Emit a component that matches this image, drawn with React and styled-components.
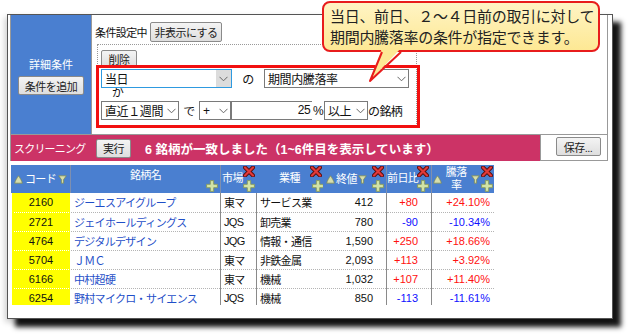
import React from "react";
import styled, { createGlobalStyle } from "styled-components";

const GlobalStyle = createGlobalStyle`
  html, body { margin: 0; padding: 0; background: #fff; }
  body { font-family: "Liberation Sans", "Noto Sans CJK JP", sans-serif; }
  * { box-sizing: border-box; }
`;

const Page = styled.div`
  position: relative;
  width: 630px;
  height: 336px;
  overflow: hidden;
  padding: 14px 0 0 7px;
`;

const Window = styled.div`
  width: 606px;
  height: 305px;
  background: #fff;
  border: 1px solid #555;
  box-shadow: 8px 8px 5px rgba(0, 0, 0, 0.92), -2px 3px 6px rgba(0, 0, 0, 0.2);
  padding: 0 4px 0 2px;
`;

const TopPanel = styled.div`
  display: grid;
  grid-template-columns: 80px 1fr;
  height: 120px;
  border-left: 1px solid #999;
  border-right: 1px solid #999;
  border-bottom: 1px solid #999;
`;

const Sidebar = styled.div`
  background: #4a7fd0;
  display: flex;
  flex-direction: column;
  align-items: center;
  justify-content: center;
  gap: 4px;
  color: #fff;
  font-size: 11px;
  padding-top: 2px;
`;

const Button = styled.button`
  font-family: "Liberation Sans", "Noto Sans CJK JP", sans-serif;
  font-size: 11px;
  letter-spacing: -0.5px;
  color: #222;
  width: ${(p) => p.$w}px;
  height: ${(p) => p.$h || 19}px;
  padding: 0;
  border: 1px solid #8a8a8a;
  border-radius: 2px;
  background: linear-gradient(#f4f4f4, #dedede);
  display: flex;
  align-items: center;
  justify-content: center;
`;

const Content = styled.div`
  border-left: 1px solid #999;
  padding: 7px 0 0 3px;
  font-size: 11px;
  color: #111;
  letter-spacing: -0.6px;
`;

const HeadLine = styled.div`
  display: flex;
  align-items: center;
  gap: 3px;
`;

const DottedBox = styled.div`
  position: relative;
  margin: 2px 0 0 2px;
  width: 320px;
  height: 84px;
  border: 1px dotted #999;
  padding: 5px 0 0 3px;
`;

const RedFrame = styled.div`
  position: absolute;
  left: -2px;
  top: 20px;
  width: 324px;
  height: 63px;
  border: 3px solid #f21010;
`;

const Row = styled.div`
  display: flex;
  align-items: center;
  height: 19px;
  margin-top: ${(p) => p.$mt || 0}px;
`;

const SelectBox = styled.div`
  position: relative;
  width: ${(p) => p.$w}px;
  height: 19px;
  border: 1px solid ${(p) => (p.$focus ? "#2e9ae0" : "#7a7a7a")};
  background: #fff;
  display: flex;
  align-items: center;
  padding-left: 3px;
  font-size: 12px;
  letter-spacing: -0.4px;
`;

const Arrow = styled.div`
  margin-left: auto;
  width: ${(p) => (p.$focus ? 15 : 13)}px;
  align-self: stretch;
  display: flex;
  align-items: center;
  justify-content: center;
  background: ${(p) => (p.$focus ? "#dcdcdc" : "transparent")};
`;

const Word = styled.span`
  display: inline-block;
  width: ${(p) => p.$w}px;
  text-align: center;
  font-size: 12px;
`;

const Ga = styled.div`
  height: 13px;
  line-height: 10px;
  padding-left: 11px;
  font-size: 12px;
`;

const NumInput = styled.div`
  width: 81px;
  height: 19px;
  border: 1px solid #7a7a7a;
  border-right: none;
  text-align: right;
  font-size: 12px;
  line-height: 17px;
  padding-right: 2px;
`;

const Suffix = styled.span`
  font-size: 12px;
`;

const ScreenRow = styled.div`
  display: flex;
  height: 26px;
  border-left: 1px solid #999;
`;

const PinkBar = styled.div`
  flex: 1;
  background: #cc3366;
  display: flex;
  align-items: center;
  color: #fff;
  padding-left: 3px;
`;

const PinkLabel = styled.span`
  width: 82px;
  font-size: 11px;
  letter-spacing: -0.8px;
`;

const MatchText = styled.span`
  margin-left: 14px;
  font-size: 12.5px;
  font-weight: bold;
  letter-spacing: 0;
`;

const SaveCell = styled.div`
  width: 68px;
  border-left: 1px solid #999;
  border-right: 1px solid #999;
  border-bottom: 1px solid #999;
  display: flex;
  align-items: center;
  justify-content: center;
  padding-left: 8px;
  padding-bottom: 2px;
`;

const TableWrap = styled.div`
  margin: 4px 0 0 1px;
  width: 483px;
  height: 140px;
  overflow: hidden;
`;

const Table = styled.table`
  border-collapse: collapse;
  table-layout: fixed;
  width: 483px;
  font-size: 11px;
`;

const Th = styled.th`
  position: relative;
  height: 28px;
  background: #4a7fd0;
  color: #fff;
  font-weight: normal;
  font-size: 11px;
  letter-spacing: -0.6px;
  white-space: nowrap;
  padding: 0 0 ${(p) => p.$pb || 0}px ${(p) => p.$pl || 0}px;
  text-align: ${(p) => p.$align || "center"};
  border-left: 1px solid ${(p) => (p.$noLine ? "#4a7fd0" : "#7e8fb0")};
  line-height: 13px;
`;

const SortHead = styled.div`
  display: flex;
  align-items: center;
  justify-content: ${(p) => p.$justify || "space-between"};
  gap: 1px;
  white-space: nowrap;
  padding: 0 ${(p) => p.$pr || 0}px 0 ${(p) => p.$pl || 0}px;
`;

const Corner = styled.span`
  position: absolute;
  right: ${(p) => p.$r}px;
  ${(p) => (p.$top ? "top: 1px;" : "bottom: 1px;")}
  line-height: 0;
`;

const Td = styled.td`
  height: 19px;
  padding: 0 ${(p) => p.$pr || 3}px 0 ${(p) => p.$pl || 3}px;
  border-bottom: 1px dotted ${(p) => (p.$code ? "#ffff00" : "#b4b4b4")};
  border-left: 1px solid ${(p) => (p.$line ? "#8a8a8a" : "transparent")};
  border-right: ${(p) => (p.$last ? "1px solid #8a8a8a" : "none")};
  background: ${(p) => (p.$code ? "#ffff00" : "#fff")};
  text-align: ${(p) => p.$align || "left"};
  color: ${(p) => p.$color || "#111"};
  white-space: nowrap;
  overflow: hidden;
  letter-spacing: ${(p) => (p.$jp ? "-0.7px" : "0")};
`;

const Callout = styled.div`
  position: absolute;
  left: 322px;
  top: 1px;
  width: 278px;
  height: 51px;
  border: 2px solid #e81c1c;
  border-radius: 8px;
  background: linear-gradient(#fff4c4, #fde894);
  padding: 3px 0 0 6px;
  font-size: 15px;
  line-height: 21px;
  letter-spacing: -0.3px;
  color: #222;
`;

const CalloutTail = styled.svg`
  position: absolute;
  left: 365px;
  top: 48px;
`;

const Chevron = () => (
  <svg width="9" height="6" viewBox="0 0 9 6">
    <path d="M0.5 0.8 L4.5 4.8 L8.5 0.8" fill="none" stroke="#666" strokeWidth="1" />
  </svg>
);

const SortUp = () => (
  <svg width="9" height="9" viewBox="0 0 9 9">
    <path d="M4.5 0.8 C6 3 8 6 8.3 8.2 L0.7 8.2 C1 6 3 3 4.5 0.8 Z" fill="#d6deae" stroke="#7f8c58" strokeWidth="0.8" />
  </svg>
);

const SortDown = () => (
  <svg width="9" height="9" viewBox="0 0 9 9">
    <path d="M0.7 0.8 L8.3 0.8 L5.6 4.6 L5.6 8.2 L3.4 8.2 L3.4 4.6 Z" fill="#d6deae" stroke="#7f8c58" strokeWidth="0.8" />
  </svg>
);

const DelX = () => (
  <svg width="12" height="11" viewBox="0 0 12 11">
    <path d="M2 1.5 L10 9.5 M10 1.5 L2 9.5" stroke="#5a0c0c" strokeWidth="4" strokeLinecap="round" />
    <path d="M2 1.5 L10 9.5 M10 1.5 L2 9.5" stroke="#e23a3a" strokeWidth="2.2" strokeLinecap="round" />
  </svg>
);

const Plus = () => (
  <svg width="12" height="12" viewBox="0 0 12 12">
    <path d="M4.3 0.6 H7.7 V4.3 H11.4 V7.7 H7.7 V11.4 H4.3 V7.7 H0.6 V4.3 H4.3 Z" fill="#d2e4a6" stroke="#86995c" strokeWidth="0.9" />
  </svg>
);

const Select = ({ w, focus, children }) => (
  <SelectBox $w={w} $focus={focus}>
    {children}
    <Arrow $focus={focus}>
      <Chevron />
    </Arrow>
  </SelectBox>
);

const rows = [
  ["2160", "ジーエスアイグループ", "東マ", "サービス業", "412", "+80", "+24.10%"],
  ["2721", "ジェイホールディングス", "JQS", "卸売業", "780", "-90", "-10.34%"],
  ["4764", "デジタルデザイン", "JQG", "情報・通信", "1,590", "+250", "+18.66%"],
  ["5704", "ＪＭＣ", "東マ", "非鉄金属", "2,093", "+113", "+3.92%"],
  ["6166", "中村超硬", "東マ", "機械", "1,032", "+107", "+11.40%"],
  ["6254", "野村マイクロ・サイエンス", "JQS", "機械", "850", "-113", "-11.61%"],
];

const signColor = (v) => (v.startsWith("-") ? "#1010ff" : "#ff1010");

export default function App() {
  return (
    <Page>
      <GlobalStyle />
      <Window>
        <TopPanel>
          <Sidebar>
            <span>詳細条件</span>
            <Button $w={66}>条件を追加</Button>
          </Sidebar>
          <Content>
            <HeadLine>
              <span>条件設定中</span>
              <Button $w={72} $h={20}>非表示にする</Button>
            </HeadLine>
            <DottedBox>
              <Button $w={36} $h={18}>削除</Button>
              <Row $mt={1}>
                <Select w={131} focus>当日</Select>
                <Word $w={32}>の</Word>
                <Select w={145}>期間内騰落率</Select>
              </Row>
              <Ga>が</Ga>
              <Row>
                <Select w={78}>直近１週間</Select>
                <Word $w={20}>で</Word>
                <Select w={32}>+</Select>
                <NumInput>25</NumInput>
                <Word $w={12}>%</Word>
                <Select w={44}>以上</Select>
                <Suffix>の銘柄</Suffix>
              </Row>
              <RedFrame />
            </DottedBox>
          </Content>
        </TopPanel>

        <ScreenRow>
          <PinkBar>
            <PinkLabel>スクリーニング</PinkLabel>
            <Button $w={35}>実行</Button>
            <MatchText>6 銘柄が一致しました（1~6件目を表示しています）</MatchText>
          </PinkBar>
          <SaveCell>
            <Button $w={45}>保存...</Button>
          </SaveCell>
        </ScreenRow>

        <TableWrap>
          <Table>
            <colgroup>
              <col style={{ width: 59 }} />
              <col style={{ width: 150 }} />
              <col style={{ width: 36 }} />
              <col style={{ width: 66 }} />
              <col style={{ width: 64 }} />
              <col style={{ width: 45 }} />
              <col style={{ width: 63 }} />
            </colgroup>
            <thead>
              <tr>
                <Th $noLine>
                  <SortHead $pl={2} $pr={3}>
                    <SortUp />
                    <span>コード</span>
                    <SortDown />
                  </SortHead>
                </Th>
                <Th $pb={8}>
                  銘柄名
                  <Corner $r={2}><Plus /></Corner>
                </Th>
                <Th $align="left" $pl={1} $pb={2}>
                  市場
                  <Corner $r={1} $top><DelX /></Corner>
                  <Corner $r={1}><Plus /></Corner>
                </Th>
                <Th $noLine $pb={2}>
                  業種
                  <Corner $r={0} $top><DelX /></Corner>
                  <Corner $r={-2}><Plus /></Corner>
                </Th>
                <Th $noLine>
                  <SortHead $pl={3} $pr={19} $justify="flex-start">
                    <SortUp />
                    <span>終値</span>
                    <SortDown />
                  </SortHead>
                  <Corner $r={2} $top><DelX /></Corner>
                  <Corner $r={2}><Plus /></Corner>
                </Th>
                <Th $align="left" $pb={2}>
                  前日比
                  <Corner $r={2} $top><DelX /></Corner>
                  <Corner $r={2}><Plus /></Corner>
                </Th>
                <Th>
                  <SortHead $pl={1} $pr={15}>
                    <SortUp />
                    <span>騰落<br />率</span>
                    <SortDown />
                  </SortHead>
                  <Corner $r={2} $top><DelX /></Corner>
                  <Corner $r={2}><Plus /></Corner>
                </Th>
              </tr>
            </thead>
            <tbody>
              {rows.map((r) => (
                <tr key={r[0]}>
                  <Td $code $align="center">{r[0]}</Td>
                  <Td $jp $color="#1f4fc8">{r[1]}</Td>
                  <Td $line $jp>{r[2]}</Td>
                  <Td $line $jp>{r[3]}</Td>
                  <Td $align="right" $pr={13}>{r[4]}</Td>
                  <Td $line $align="right" $pr={13} $color={signColor(r[5])}>{r[5]}</Td>
                  <Td $line $last $align="right" $pr={4} $color={signColor(r[6])}>{r[6]}</Td>
                </tr>
              ))}
            </tbody>
          </Table>
        </TableWrap>
      </Window>

      <Callout>
        当日、前日、２～４日前の取引に対して
        <br />
        期間内騰落率の条件が指定できます。
      </Callout>
      <CalloutTail width="40" height="36" viewBox="0 0 40 36">
        <polygon points="17,0 36,0 5,33" fill="#fde894" />
        <path d="M17,4 L5,33 L36,4" fill="none" stroke="#e81c1c" strokeWidth="2" strokeLinejoin="round" />
      </CalloutTail>
    </Page>
  );
}
